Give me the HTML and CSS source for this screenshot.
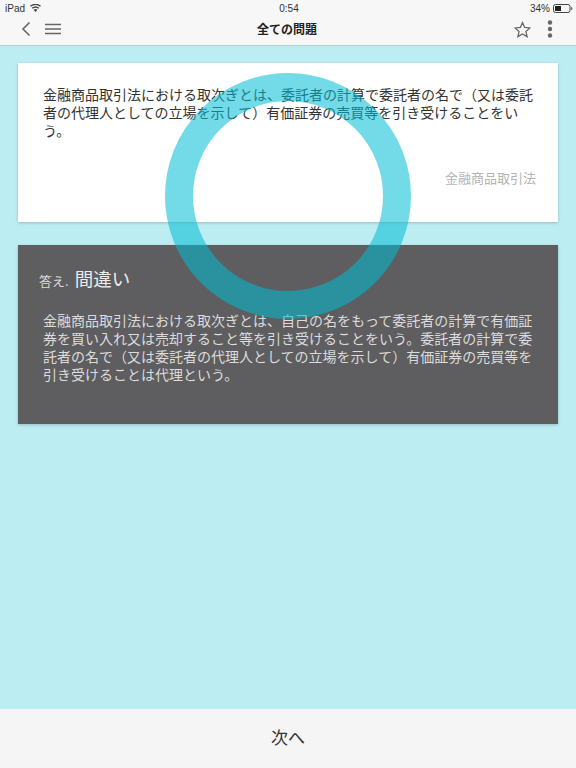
FILE: index.html
```html
<!DOCTYPE html>
<html lang="ja">
<head>
  <meta charset="UTF-8">
  <title>全ての問題</title>
  <link rel="stylesheet" href="styles.css">
</head>
<body>

  <div class="top-bar">
    <div class="status-bar">
      <div class="status-left">
        <span>iPad</span>
        <svg class="wifi" width="11" height="8" viewBox="0 0 11 8"><path d="M5.5 8 3.6 5.8a3 3 0 0 1 3.8 0zM2.7 4.8 1.7 3.7a6 6 0 0 1 7.6 0L8.3 4.8a4.4 4.400 0 0 0-5.6 0zM.9 2.8 0 1.8a8.4 8.4 0 0 1 11 0l-.9 1a7 7 0 0 0-9.2 0z" fill="#444"/></svg>
      </div>
      <div class="status-time">0:54</div>
      <div class="status-right">
        <span>34%</span>
        <svg width="20" height="9" viewBox="0 0 20 9"><rect x=".5" y=".5" width="16.500" height="8" rx="2" fill="none" stroke="#444"/><rect x="2" y="2" width="6" height="5" fill="#222"/><path d="M18.200 3v3c.8-.2 1.200-.8 1.200-1.500s-.4-1.300-1.200-1.500z" fill="#444"/></svg>
      </div>
    </div>
    <div class="nav-bar">
      <div class="nav-left">
        <svg width="10" height="16" viewBox="0 0 10 16"><path d="M8.500 1.500 2 8l6.500 6.500" fill="none" stroke="#666" stroke-width="1.600"/></svg>
        <svg width="16" height="12" viewBox="0 0 16 12"><path d="M0 1.500h16M0 6h16M0 10.500h16" stroke="#666" stroke-width="1.500"/></svg>
      </div>
      <div class="nav-title">全ての問題</div>
      <div class="nav-right">
        <svg width="17" height="17" viewBox="0 0 24 24"><path d="M12 2.200l3 6.900 7.500.7-5.700 5 1.700 7.300-6.500-3.800-6.500 3.800 1.700-7.300-5.700-5 7.500-.7z" fill="none" stroke="#666" stroke-width="1.800"/></svg>
        <svg width="6" height="18" viewBox="0 0 6 18"><circle cx="3" cy="2.500" r="2.200" fill="#666"/><circle cx="3" cy="9" r="2.200" fill="#666"/><circle cx="3" cy="15.500" r="2.200" fill="#666"/></svg>
      </div>
    </div>
  </div>

  <div class="content">
    <div class="card question">
      <p class="card-text">金融商品取引法における取次ぎとは、委託者の計算で委託者の名で（又は委託者の代理人としての立場を示して）有価証券の売買等を引き受けることをいう。</p>
      <div class="category">金融商品取引法</div>
    </div>

    <div class="card answer">
      <div class="answer-head"><span class="answer-label">答え.</span> <span class="answer-value">間違い</span></div>
      <p class="card-text">金融商品取引法における取次ぎとは、自己の名をもって委託者の計算で有価証券を買い入れ又は売却すること等を引き受けることをいう。委託者の計算で委託者の名で（又は委託者の代理人としての立場を示して）有価証券の売買等を引き受けることは代理という。</p>
    </div>
  </div>

  <div class="next-bar">次へ</div>

  <div class="ring"></div>

</body>
</html>
```

FILE: styles.css
```css
body {
  margin: 0;
  width: 576px;
  height: 768px;
  overflow: hidden;
  position: relative;
  display: flex;
  flex-direction: column;
  background: #bcedf3;
  font-family: "Noto Sans CJK JP", "Liberation Sans", sans-serif;
  color: #333;
}

.top-bar {
  height: 45px;
  flex-shrink: 0;
  background: #f7f7f7;
  border-bottom: 1px solid #b5cfd0;
}

.status-bar {
  height: 16px;
  padding: 0 3px 0 5px;
  display: grid;
  grid-template-columns: 1fr auto 1fr;
  align-items: center;
  font-family: "Liberation Sans", sans-serif;
  font-size: 10px;
  color: #333;
}

.status-left {
  display: flex;
  align-items: center;
  gap: 5px;
}

.status-right {
  display: flex;
  justify-content: flex-end;
  align-items: center;
  gap: 3px;
}

.nav-bar {
  height: 26px;
  padding: 0 23px 0 21px;
  display: grid;
  grid-template-columns: 1fr auto 1fr;
  align-items: center;
}

.nav-left {
  display: flex;
  align-items: center;
  gap: 14px;
}

.nav-title {
  margin-bottom: 2px;
  font-size: 12px;
  font-weight: 700;
  color: #222;
}

.nav-right {
  display: flex;
  justify-content: flex-end;
  align-items: center;
  gap: 16px;
}

.content {
  flex: 1;
  padding: 17px 18px 0;
  display: flex;
  flex-direction: column;
  gap: 23px;
}

.card {
  box-shadow: 0 1px 3px rgba(0,0,0,0.2);
  box-sizing: border-box;
}

.card-text {
  margin: 0;
  font-size: 14px;
  line-height: 18px;
}

.question {
  height: 159px;
  padding: 22px 22px 0 25px;
  background: white;
  color: #333;
}

.category {
  margin-top: 30px;
  text-align: right;
  font-size: 13px;
  line-height: 18px;
  color: #b4b4b4;
}

.answer {
  height: 179px;
  padding: 18px 22px 0 25px;
  background: #5e5d5f;
  color: #dcdcdc;
}

.answer-head {
  margin: 0 0 15px -4px;
  display: flex;
  align-items: baseline;
  gap: 6px;
  line-height: 30px;
}

.answer-label {
  font-size: 13px;
}

.answer-value {
  font-size: 18.500px;
  color: #ececec;
}

.next-bar {
  height: 59px;
  padding-bottom: 4px;
  box-sizing: border-box;
  flex-shrink: 0;
  display: flex;
  align-items: center;
  justify-content: center;
  background: #f5f5f6;
  font-size: 17px;
  color: #333;
}

/* loading ring sits over the cards */
.ring {
  position: absolute;
  left: 165px;
  top: 73px;
  width: 246px;
  height: 246px;
  box-sizing: border-box;
  border: 28px solid rgba(0, 188, 212, 0.55);
  border-radius: 50%;
}
```
